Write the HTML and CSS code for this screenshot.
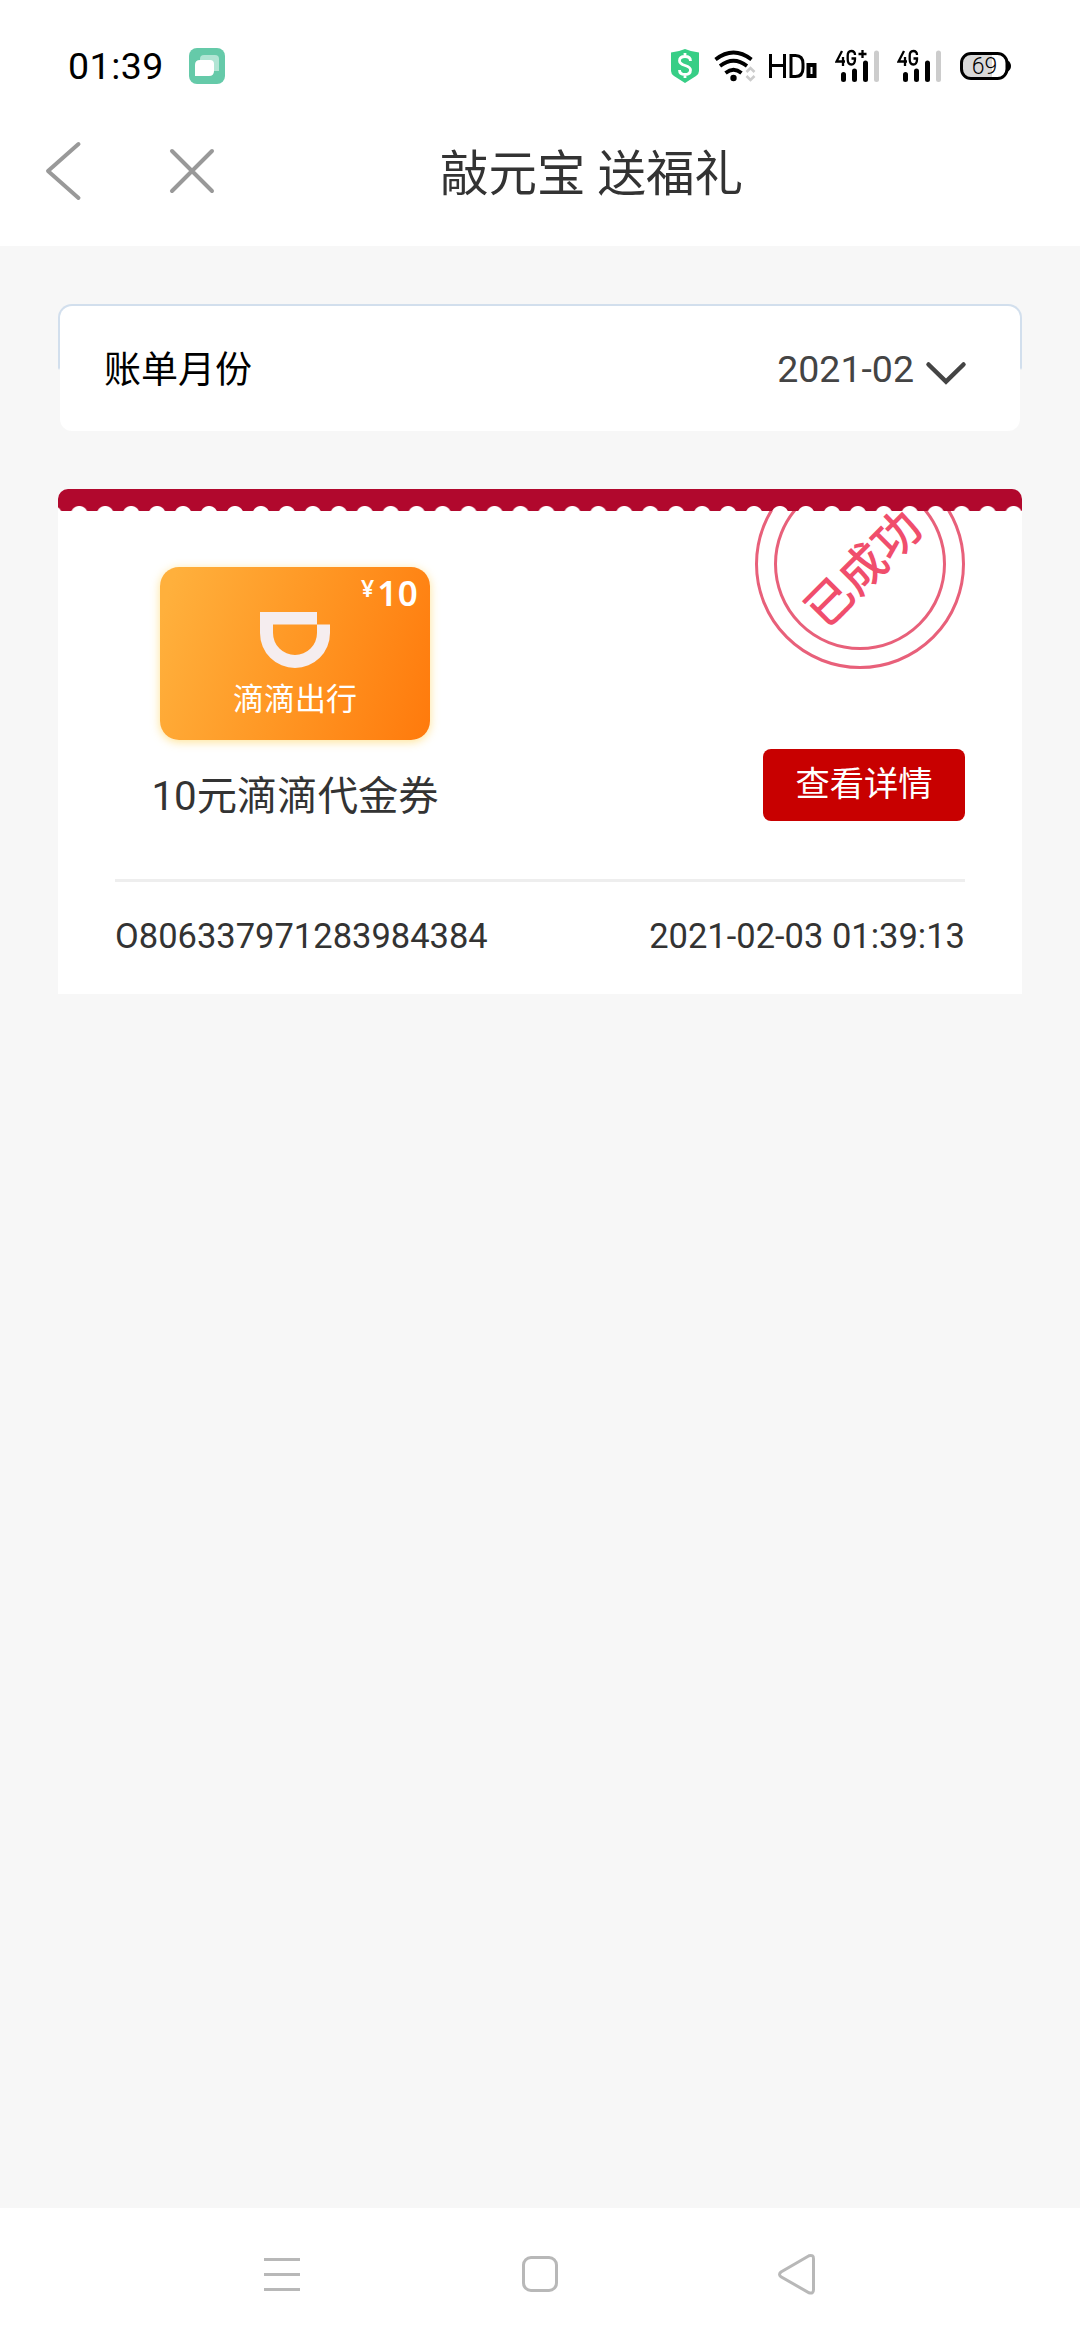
FILE: index.html
```html
<!DOCTYPE html>
<html lang="zh-CN">
<head>
<meta charset="utf-8">
<title>敲元宝 送福礼</title>
<link rel="stylesheet" href="styles.css">
</head>
<body>
<div class="screen">
  <div class="status">
    <span class="clock">01:39</span>
    <svg class="app" width="36" height="36" viewBox="0 0 36 36"><rect width="36" height="36" rx="8" fill="#65caa9"/><path d="M15 7h11q4 0 4 4v12H11V11q0-4 4-4z" fill="#b1e5d4"/><path d="M11 12h10q4 0 4 4v7q0 5-5 5H6V17q0-5 5-5z" fill="#fff"/></svg>
    <div class="signals">
      <svg width="28" height="36" viewBox="0 0 28 36"><path d="M14 1q7 3 14 3.500V23q0 3-3 5l-11 7L3 28q-3-2-3-5V4.500Q7 4 14 1z" fill="#37ce86"/><path d="M19.500 13q0-4.500-5.500-4.500t-5.500 4.200c0 6 11 3.600 11 9.300q0 4.500-5.500 4.500T8.500 22M14 5v4M14 26v4" fill="none" stroke="#fff" stroke-width="2.800"/></svg>
      <svg class="wifi" width="42" height="36" viewBox="0 0 42 36" fill="none"><path d="M1.500 11.500Q19.500-2.500 37.500 11.500M6 18Q19.500 7.500 33 18M11.500 25Q19.500 18.500 27.500 25" stroke="#000" stroke-width="3.700"/><circle cx="19.500" cy="30" r="3.200" fill="#000"/><path d="M32.500 24l4-4 4 4M32.500 28l4 4 4-4" stroke="#ccc" stroke-width="2.600"/></svg>
      <svg class="hd" width="50" height="36" viewBox="0 0 50 36" fill="none" stroke="#000" stroke-width="3"><path d="M2.500 6v24M16.500 6v24M2.500 17.500h14M23 7.500h4.500Q35 7.500 35 16v4q0 8.500-7.500 8.500H23z"/><path d="M40.500 17h6v11h-6z" stroke-width="4"/></svg>
      <svg class="cell" width="46" height="36" viewBox="0 0 46 36" fill="none"><path d="M7 3L1.500 13.500H10M8 9v9M20 7q0-4-3.700-4T12.700 8v3q0 5.500 3.600 5.500T20 11.500V10.500h-3.500M23.500 6h8M27.500 2v8" stroke="#000" stroke-width="2.300"/><path d="M8.500 26.500v5M19.500 23v8.500M30.500 15v16.500" stroke="#000" stroke-width="5" stroke-linecap="round"/><path d="M41.500 5v26.500" stroke="#ccc" stroke-width="5" stroke-linecap="round"/></svg>
      <svg class="cell2" width="46" height="36" viewBox="0 0 46 36" fill="none"><path d="M7 3L1.500 13.500H10M8 9v9M20 7q0-4-3.700-4T12.700 8v3q0 5.500 3.600 5.500T20 11.500V10.500h-3.500" stroke="#000" stroke-width="2.300"/><path d="M8.500 26.500v5M19.500 23v8.500M30.500 15v16.500" stroke="#000" stroke-width="5" stroke-linecap="round"/><path d="M41.500 5v26.500" stroke="#ccc" stroke-width="5" stroke-linecap="round"/></svg>
      <svg class="battery" width="52" height="36" viewBox="0 0 52 36"><path d="M12 5h20v24H12Q2 29 2 19v-4Q2 5 12 5z" fill="#d9d9d9"/><rect x="1.500" y="5.500" width="45.500" height="25" rx="9.500" fill="none" stroke="#000" stroke-width="3"/><path d="M47 12q4 2 4 6t-4 6z"/><text x="24.500" y="25.500" text-anchor="middle" class="level">69</text></svg>
    </div>
  </div>
  <header class="header">
    <svg class="back" width="40" height="64" viewBox="0 0 40 64"><path d="M35.500 5L5 32l30.500 27"/></svg>
    <svg class="close" width="48" height="48" viewBox="0 0 48 48"><path d="M4 4l40 40M44 4L4 44"/></svg>
    <h1 class="title">敲元宝 送福礼</h1>
  </header>
  <main class="content">
    <section class="month">
      <span class="label">账单月份</span>
      <span class="value">2021-02</span>
      <svg width="42" height="26" viewBox="0 0 42 26"><path d="M3.500 3.500L21 20.500 38.500 3.500" fill="none" stroke="#444" stroke-width="4.500" stroke-linecap="round"/></svg>
    </section>
    <section class="ticket">
      <div class="edge"></div>
      <div class="body">
        <div class="product">
          <div class="coupon">
            <div class="amount"><span class="yen">¥</span>10</div>
            <svg class="logo" width="70" height="56" viewBox="0 0 70 56"><path d="M0 0H57V12.500H70V21A35 35 0 0 1 0 21zM13 12.500V21A22 22 0 0 0 57 21V12.500z" fill="#f5edef" fill-rule="evenodd"/></svg>
            <div class="brand">滴滴出行</div>
          </div>
          <div class="name">10元滴滴代金券</div>
        </div>
        <div class="stamp"><span class="stamp-text">已成功</span></div>
        <a class="button">查看详情</a>
      </div>
      <div class="meta"><span>O806337971283984384</span><span>2021-02-03 01:39:13</span></div>
    </section>
  </main>
  <nav class="nav">
    <svg width="40" height="44" viewBox="0 0 40 44"><path d="M2 7.500h36M2 22.500h36M2 37.500h36"/></svg>
    <svg width="40" height="44" viewBox="0 0 40 44"><rect x="3.500" y="5.500" width="33" height="33" rx="7.500"/></svg>
    <svg width="40" height="44" viewBox="0 0 40 44"><path d="M31 3.700L3 20q-3 2.400 0 4.800L31 40.800q4.500 1.200 4.500-3V6.700q0-4.200-4.500-3z"/></svg>
  </nav>
</div>
</body>
</html>
```
FILE: styles.css
```css
* { box-sizing: border-box; }
body { margin: 0; background: #f7f7f7; }
svg { display: block; flex: none; }
.screen {
  width: 1080px;
  height: 2340px;
  display: flex;
  flex-direction: column;
  font-family: Roboto, "Noto Sans CJK SC", sans-serif;
  color: #333;
  white-space: nowrap;
}
.status {
  height: 132px;
  padding: 0 68px;
  display: flex;
  align-items: center;
  background: #fff;
}
.clock { width: 121px; font-size: 37.5px; line-height: 44px; letter-spacing: .5px; color: #000; }
.signals { display: flex; margin-left: auto; }
.wifi { margin-left: 15px; }
.hd { margin-left: 12px; }
.cell { margin-left: 17px; }
.cell2 { margin-left: 16px; }
.battery { margin-left: 17px; }
.level { font-size: 23px; font-weight: 300; }
.header {
  height: 114px;
  padding: 0 0 36px 43px;
  display: flex;
  align-items: center;
  background: #fff;
}
.header svg { fill: none; stroke: #999; stroke-width: 4; stroke-linecap: round; stroke-linejoin: round; }
.close { margin-left: 85px; }
.title { margin: 8px 0 0 224px; font-size: 48.500px; line-height: 60px; font-weight: 400; }
.content { flex: 1; padding: 58px 58px 0; background: #f7f7f7; }
.month {
  height: 129px;
  padding: 0 55px 0 44px;
  display: flex;
  align-items: center;
  border-radius: 14px;
  border: 2px solid transparent;
  background: linear-gradient(#fff, #fff) padding-box, linear-gradient(#d2dfed 0 64px, #f7f7f7 66px) border-box;
}
.label { margin-top: -4px; font-size: 37px; color: #000; }
.value { margin-left: auto; font-size: 37.500px; color: #444; }
.month svg { margin: 10px -2px 0 11px; }
.ticket { margin-top: 56px; height: 505px; background: #fff; border-radius: 10px 10px 0 0; overflow: hidden; }
.edge {
  height: 22px;
  background: radial-gradient(circle at 12.980px 25.500px, #fff 8px, #b1082d 9px) 8.300px 0 / 25.960px 22px repeat-x;
}
.body {
  position: relative;
  height: 371px;
  margin: 0 57px;
  padding: 56px 0 0 37px;
  border-bottom: 3px solid #eee;
  overflow: hidden;
}
.product { width: 286px; display: flex; flex-direction: column; align-items: center; }
.coupon {
  width: 270px;
  height: 173px;
  padding-top: 7px;
  display: flex;
  flex-direction: column;
  align-items: center;
  border-radius: 19px;
  background: linear-gradient(108deg, #ffb03c 5%, #ff9724 50%, #ff7b0d 98%);
  box-shadow: 0 2px 10px #ffdc7acc;
  color: #fff;
}
.amount { align-self: flex-end; margin-right: 12px; font-family: "Noto Sans", sans-serif; font-weight: 600; font-size: 35px; line-height: 38px; display: flex; align-items: flex-start; letter-spacing: .3px; }
.yen { font-size: 23px; line-height: 28px; margin-right: 3px; }
.brand { margin-top: 11px; font-size: 31px; line-height: 42px; }
.name { margin-top: 27px; font-size: 40.300px; line-height: 60px; }
.stamp {
  position: absolute;
  left: 640px;
  top: -52px;
  width: 210px;
  height: 210px;
  border: 3px solid #e8607a;
  border-radius: 50%;
  display: flex;
  align-items: center;
  justify-content: center;
}
.stamp::after { content: ""; position: absolute; inset: 16px; border: 3px solid #e8607a; border-radius: 50%; }
.stamp-text { transform: translate(3px, 5px) rotate(-45deg); font-size: 47px; line-height: 48px; font-weight: 500; color: #f04e6c; }
.button {
  position: absolute;
  right: 0;
  top: 238px;
  width: 202px;
  height: 72px;
  border-radius: 8px;
  background: #c80000;
  color: #fff;
  font-size: 34.300px;
  line-height: 70px;
  text-align: center;
}
.meta { height: 108px; padding: 0 57px; display: flex; justify-content: space-between; align-items: center; font-size: 34.500px; }
.nav {
  height: 132px;
  padding: 0 262px;
  display: flex;
  align-items: center;
  justify-content: space-between;
  background: #fff;
}
.nav svg { fill: none; stroke: #b8b8b8; stroke-width: 3; }
```
